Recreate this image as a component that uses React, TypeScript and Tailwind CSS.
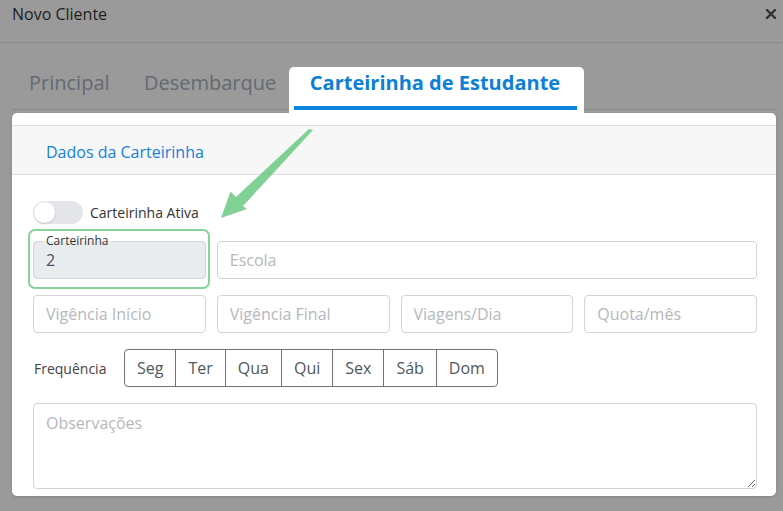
import React from 'react';

const dias = ['Seg', 'Ter', 'Qua', 'Qui', 'Sex', 'Sáb', 'Dom'];

const inputCls =
  'h-[38px] w-full rounded border border-[#ced4da] bg-white px-3 text-[16px] text-[#495057] outline-none placeholder:text-[#b4b8bc]';

const Toggle = () => (
  <div className="flex h-[23px] w-[50px] items-center rounded-full bg-[#e3e5e8] px-[1px]">
    <div className="h-[21px] w-[21px] rounded-full bg-white shadow-[0_1px_2px_rgba(0,0,0,0.15)]" />
  </div>
);

const App = () => {
  return (
    <div
      className="relative h-[511px] w-[783px] overflow-hidden bg-[#9a9a9a]"
      style={{ fontFamily: '"Open Sans", "Liberation Sans", sans-serif' }}
    >
      {/* Modal header */}
      <div className="flex h-[43px] items-start justify-between border-b border-[#8a8a8a] pl-3 pr-[7px] pt-[3px]">
        <span className="text-[16px] leading-[22px] text-[#1e1e1e]">Novo Cliente</span>
        <svg width="10" height="10" viewBox="0 0 10 10" className="mt-[6px]">
          <path d="M1 1 L9 9 M9 1 L1 9" stroke="#333" strokeWidth="2.4" strokeLinecap="square" />
        </svg>
      </div>

      {/* Tabs */}
      <div className="ml-3 mr-[5px] mt-[24px] flex h-[43px] border-b border-[#8a8a8a]">
        <div className="w-[115px] pl-[17px] pt-[2px] text-[20px] leading-[28px] text-[#636a72]">Principal</div>
        <div className="w-[162px] pl-[17px] pt-[2px] text-[20px] leading-[28px] text-[#636a72]">Desembarque</div>
        <div className="relative z-10 h-[46px] w-[295px] rounded-t-[5px] bg-white pr-[3px] pt-[2px] text-center text-[20px] font-bold leading-[28px] text-[#0b80d6]">
          Carteirinha de Estudante
          <div className="absolute bottom-[3px] left-[5px] right-[7px] h-[4px] bg-[#0b85dc]" />
        </div>
      </div>

      {/* Card */}
      <div className="mx-3 mt-[3px] h-[383px] w-[764px] overflow-hidden rounded-[5px] bg-white pt-[12px] shadow-[0_1px_3px_rgba(0,0,0,0.15)]">
        <div className="flex h-[50px] items-center border-y border-[#dedede] bg-[#f7f7f7] pl-[34px] pt-[3px]">
          <span className="text-[16px] text-[#1580e0]">Dados da Carteirinha</span>
        </div>

        <div className="pl-[21px] pr-[19px] pt-[26px]">
          <div className="flex items-center gap-[7px]">
            <Toggle />
            <span className="text-[14px] text-[#333]">Carteirinha Ativa</span>
          </div>

          <div className="mt-[17px] grid grid-cols-4 gap-[11px]">
            <div className="relative">
              <div className="flex h-[38px] items-center rounded border border-[#ced4da] bg-[#e9ecef] px-3 text-[16px] text-[#495057]">
                2
              </div>
              <span className="absolute -top-[8px] left-[10px] bg-[linear-gradient(to_bottom,#fff_50%,#e9ecef_50%)] px-[3px] text-[12px] leading-[16px] text-[#333]">
                Carteirinha
              </span>
              <div className="pointer-events-none absolute -bottom-[10px] -left-[5px] -right-[4px] -top-[12px] rounded-[7px] border-2 border-[#86d49c]" />
            </div>
            <div className="col-span-3">
              <input className={inputCls} placeholder="Escola" readOnly />
            </div>
          </div>

          <div className="mt-[16px] grid grid-cols-4 gap-[11px]">
            <input className={inputCls} placeholder="Vigência Início" readOnly />
            <input className={inputCls} placeholder="Vigência Final" readOnly />
            <input className={inputCls} placeholder="Viagens/Dia" readOnly />
            <input className={inputCls} placeholder="Quota/mês" readOnly />
          </div>

          <div className="mt-[16px] flex items-center">
            <span className="w-[91px] pl-[1px] text-[14px] text-[#444]">Frequência</span>
            <div className="flex h-[38px] rounded border border-[#6c757d]">
              {dias.map((d, i) => (
                <div
                  key={d}
                  className={`flex items-center px-3 text-[16px] text-[#4f5760] ${i > 0 ? 'border-l border-[#6c757d]' : ''}`}
                >
                  {d}
                </div>
              ))}
            </div>
          </div>

          <textarea
            className="mt-[16px] block h-[86px] w-full rounded border border-[#ced4da] px-3 py-[7px] text-[16px] leading-[24px] text-[#495057] outline-none placeholder:text-[#b4b8bc]"
            placeholder="Observações"
            readOnly
          />
        </div>
      </div>

      {/* Pointer arrow */}
      <svg className="pointer-events-none absolute left-0 top-0" width="783" height="511">
        <polygon
          points="309,129 313,130 243,206 247,209 221,218 230.5,191.5 236,197"
          fill="#6fcb88"
          fillOpacity="0.88"
        />
      </svg>
    </div>
  );
};

export default App;
